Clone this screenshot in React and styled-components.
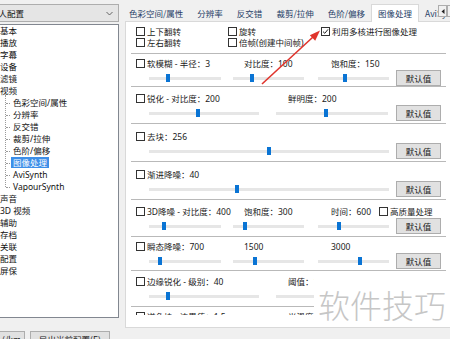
import React from "react"
import styled, { createGlobalStyle } from "styled-components"

const GlobalStyle = createGlobalStyle`
  html, body {
    margin: 0;
    padding: 0;
    background: #f0f0f0;
  }
  body {
    font-family: "Noto Sans", "Noto Sans CJK SC", sans-serif;
    font-size: 8.5px;
    color: #1a1a1a;
  }
`

const topItems = ["基本", "播放", "字幕", "设备", "滤镜", "视频"]
const videoItems = ["色彩空间/属性", "分辨率", "反交错", "裁剪/拉伸", "色阶/偏移", "图像处理", "AviSynth", "VapourSynth"]
const bottomItems = ["声音", "3D 视频", "辅助", "存档", "关联", "配置", "屏保"]
const tabs = ["色彩空间/属性", "分辨率", "反交错", "裁剪/拉伸", "色阶/偏移", "图像处理", "AviSynth"]

const THREE = [
  { w: 93, li: 0, ml: 13, sw: 72 },
  { w: 85, li: 15, ml: 4, sw: 71 },
  { w: 77, li: 17, ml: 4, sw: 71 },
]
const TWO = [
  { w: 137, li: 0, ml: 13, sw: 110 },
  { w: 118, li: 15, ml: 3, sw: 112 },
]
const ONE = [{ w: 255, li: 0, ml: 13, sw: 240 }]

const rows = [
  { h: 33, pt: 3, cols: THREE, labels: ["软模糊 - 半径：3", "对比度：100", "饱和度：150"], thumbs: [19, 19, 27] },
  { h: 37, pt: 5, cols: TWO, labels: ["锐化 - 对比度：200", "鲜明度：200"], thumbs: [49, 50] },
  { h: 38, pt: 6, cols: ONE, labels: ["去块：256"], thumbs: [120] },
  { h: 38, pt: 6, cols: ONE, labels: ["渐进降噪：40"], thumbs: [88] },
  { h: 37, pt: 5, cols: THREE, labels: ["3D降噪 - 对比度：400", "饱和度：300", "时间：600"], thumbs: [15, 12, 21], extra: "高质量处理" },
  { h: 34, pt: 3, cols: THREE, labels: ["瞬态降噪：700", "1500", "3000"], thumbs: [11, 22, 42] },
  { h: 36, pt: 4, cols: TWO, labels: ["边缘锐化 - 级别：40", "阈值：10"], thumbs: [19, 60] },
  { h: 36, pt: 3, cols: TWO, labels: ["逆色块 - 边界值：1.5", "光滑度：4"], thumbs: [30, 40] },
]

const Check = ({ checked }) => (
  <CheckBox>
    {checked && (
      <svg width="7" height="7" viewBox="0 0 7 7">
        <path d="M1 3.6 L2.8 5.3 L6 1.4" fill="none" stroke="#222" strokeWidth="1" />
      </svg>
    )}
  </CheckBox>
)

const App = () => {
  return (
    <Window>
      <GlobalStyle />
      <Main>
        <Side>
          <Combo>
            <span>个人配置</span>
            <svg width="7" height="5" viewBox="0 0 7 5">
              <path d="M0.5 1 L3.5 4 L6.5 1" fill="none" stroke="#555" strokeWidth="0.9" />
            </svg>
          </Combo>
          <Tree>
            {topItems.map(t => (
              <TreeItem key={t}>{t}</TreeItem>
            ))}
            <ChildGroup>
              {videoItems.map(t => (
                <ChildItem key={t}>
                  <ItemText $selected={t === "图像处理"}>{t}</ItemText>
                </ChildItem>
              ))}
            </ChildGroup>
            {bottomItems.map(t => (
              <TreeItem key={t}>{t}</TreeItem>
            ))}
          </Tree>
        </Side>

        <Panel>
          <TabStrip>
            {tabs.map(t => (
              <Tab key={t} $active={t === "图像处理"}>{t}</Tab>
            ))}
            <TabScroll>
              <ScrollBtn>
                <svg width="4" height="5" viewBox="0 0 4 5"><path d="M3.5 0 L0.5 2.5 L3.5 5 Z" fill="#222" /></svg>
              </ScrollBtn>
              <ScrollBtn>
                <svg width="4" height="5" viewBox="0 0 4 5"><path d="M0.5 0 L3.5 2.5 L0.5 5 Z" fill="#222" /></svg>
              </ScrollBtn>
            </TabScroll>
          </TabStrip>
          <Page>
            <Scroll>
              <TopRow>
                <CheckCol $w={92}><Check />上下翻转</CheckCol>
                <CheckCol $w={93}><Check />旋转</CheckCol>
                <CheckCol><Check checked />利用多核进行图像处理</CheckCol>
                <CheckCol $w={92}><Check />左右翻转</CheckCol>
                <CheckCol $w={93}><Check />倍帧(创建中间帧)</CheckCol>
              </TopRow>
              {rows.map((r, i) => (
                <Row key={i} $h={r.h} $pt={r.pt}>
                  <LabelLine>
                    {r.cols.map((c, j) => (
                      <Col key={j} $w={c.w} $li={c.li}>
                        {j === 0 && <Check />}
                        {r.labels[j]}
                        {j === 2 && r.extra && (
                          <Extra><Check />{r.extra}</Extra>
                        )}
                      </Col>
                    ))}
                  </LabelLine>
                  <SliderLine>
                    {r.cols.map((c, j) => (
                      <Col key={j} $w={c.w}>
                        <Track $ml={c.ml} $w={c.sw}>
                          <Thumb $at={r.thumbs[j]} />
                        </Track>
                      </Col>
                    ))}
                    <DefaultButton>默认值</DefaultButton>
                  </SliderLine>
                </Row>
              ))}
            </Scroll>
          </Page>
        </Panel>
      </Main>

      <Footer>
        <FootButton $w={44}>导入(/km</FootButton>
        <FootButton $w={80}>导出当前配置(E)</FootButton>
      </Footer>

      <Arrow viewBox="0 0 450 339" width="450" height="339">
        <line x1="262" y1="84" x2="313" y2="37" stroke="#e0342c" strokeWidth="1.6" />
        <path d="M320 30.5 L315.2 40.8 L309.8 35.2 Z" fill="#e0342c" />
      </Arrow>
      <Watermark>软件技巧</Watermark>
    </Window>
  )
}

export default App

const Window = styled.div`
  position: relative;
  width: 450px;
  height: 339px;
  overflow: hidden;
  display: flex;
  flex-direction: column;
  background: #f0f0f0;
`

const Main = styled.div`
  display: flex;
  height: 328px;
  flex-shrink: 0;
`

const Side = styled.div`
  width: 134px;
  margin-left: -15px;
  flex-shrink: 0;
  display: flex;
  flex-direction: column;
`

const Combo = styled.div`
  margin-top: 4px;
  height: 18px;
  box-sizing: border-box;
  border: 1px solid #adadad;
  background: #e5e5e5;
  display: flex;
  align-items: center;
  justify-content: space-between;
  padding: 0 5px 0 4px;
  font-family: "Noto Sans CJK SC", sans-serif;
  font-size: 8.5px;
  color: #111;
`

const Tree = styled.div`
  margin-top: 2px;
  height: 294px;
  box-sizing: border-box;
  border: 1px solid #828790;
  background: #fff;
  font-family: "Noto Sans", "Noto Sans CJK SC", sans-serif;
  color: #111;
`

const TreeItem = styled.div`
  height: 12px;
  line-height: 12px;
  padding-left: 14px;
  white-space: nowrap;
`

const ChildGroup = styled.div`
  position: relative;

  &::before {
    content: "";
    position: absolute;
    left: 19px;
    top: -2px;
    bottom: 6px;
    border-left: 1px dotted #9a9a9a;
  }
`

const ChildItem = styled.div`
  position: relative;
  height: 12px;
  line-height: 12px;
  padding-left: 25px;
  white-space: nowrap;

  &::before {
    content: "";
    position: absolute;
    left: 20px;
    top: 6px;
    width: 4px;
    border-top: 1px dotted #9a9a9a;
  }
`

const ItemText = styled.span`
  display: inline-block;
  padding: 0 2px;
  height: 11px;
  line-height: 11px;
  background: ${p => (p.$selected ? "#3d8ee8" : "transparent")};
  color: ${p => (p.$selected ? "#fff" : "inherit")};
`

const Panel = styled.div`
  margin-left: 6px;
  width: 327px;
  flex-shrink: 0;
  display: flex;
  flex-direction: column;
`

const TabStrip = styled.div`
  position: relative;
  height: 21px;
  display: flex;
  align-items: flex-end;
  margin-left: -3px;
  font-family: "Noto Sans CJK SC", sans-serif;
  font-size: 8.5px;
  color: #263d66;
  z-index: 1;
`

const Tab = styled.div`
  height: ${p => (p.$active ? "18px" : "17px")};
  line-height: 16px;
  padding: 0 ${p => (p.$active ? "6px" : "6px")};
  margin: ${p => (p.$active ? "0 -1px -1px" : "0")};
  box-sizing: border-box;
  white-space: nowrap;
  background: ${p => (p.$active ? "#fff" : "transparent")};
  border: 1px solid ${p => (p.$active ? "#d9d9d9" : "transparent")};
  border-bottom: none;
  flex-shrink: 0;
`

const TabScroll = styled.div`
  position: absolute;
  left: 316px;
  top: 5px;
  display: flex;
`

const ScrollBtn = styled.div`
  width: 9px;
  height: 12px;
  box-sizing: border-box;
  border: 1px solid #adadad;
  background: #f0f0f0;
  display: flex;
  align-items: center;
  justify-content: center;
`

const Page = styled.div`
  height: 307px;
  box-sizing: border-box;
  border: 1px solid #d9d9d9;
  background: #fff;
  font-family: "Noto Sans", "Noto Sans CJK SC", sans-serif;
  font-size: 8.5px;
  color: #1a1a1a;
`

const Scroll = styled.div`
  height: 293px;
  overflow: hidden;
`

const TopRow = styled.div`
  margin: 0 5px;
  padding: 4px 5px 0;
  height: 32px;
  box-sizing: border-box;
  border-bottom: 1px solid #b9b9b9;
  display: flex;
  flex-wrap: wrap;
  align-content: flex-start;
`

const CheckCol = styled.div`
  width: ${p => (p.$w ? `${p.$w}px` : "auto")};
  flex: ${p => (p.$w ? "none" : "1")};
  height: 11px;
  line-height: 11px;
  display: flex;
  align-items: center;
  white-space: nowrap;
`

const CheckBox = styled.span`
  width: 9px;
  height: 9px;
  box-sizing: border-box;
  border: 1px solid #333;
  background: #fff;
  margin-right: 2px;
  flex-shrink: 0;
  display: inline-flex;
  align-items: center;
  justify-content: center;
`

const Row = styled.div`
  margin: 0 5px;
  padding: ${p => p.$pt}px 5px 0;
  height: ${p => p.$h}px;
  box-sizing: border-box;
  border-bottom: 1px solid #b9b9b9;
`

const LabelLine = styled.div`
  display: flex;
  height: 12px;
  align-items: center;
`

const Col = styled.div`
  width: ${p => p.$w}px;
  padding-left: ${p => p.$li || 0}px;
  box-sizing: border-box;
  flex-shrink: 0;
  display: flex;
  align-items: center;
  white-space: nowrap;
`

const Extra = styled.span`
  display: inline-flex;
  align-items: center;
  margin-left: 8px;
`

const SliderLine = styled.div`
  display: flex;
  height: 18px;
  align-items: center;
`

const Track = styled.div`
  position: relative;
  margin-left: ${p => p.$ml}px;
  width: ${p => p.$w}px;
  height: 3px;
  background: #e6e6e6;
`

const Thumb = styled.div`
  position: absolute;
  left: ${p => p.$at}px;
  top: 50%;
  width: 4px;
  height: 8px;
  margin: -4px 0 0 -2px;
  background: #0a74d4;
`

const DefaultButton = styled.button`
  margin-left: auto;
  width: 45px;
  height: 16px;
  padding: 0;
  box-sizing: border-box;
  border: 1px solid #adadad;
  background: #e1e1e1;
  font-family: "Noto Sans CJK SC", sans-serif;
  font-size: 8.5px;
  line-height: 14px;
  color: #1a1a1a;
`

const Footer = styled.div`
  display: flex;
  gap: 5px;
  padding-top: 3px;
  margin-left: -19px;
`

const FootButton = styled.div`
  width: ${p => p.$w}px;
  height: 18px;
  box-sizing: border-box;
  border: 1px solid #adadad;
  background: #e1e1e1;
  text-align: center;
  line-height: 15px;
  font-family: "Noto Sans CJK SC", sans-serif;
  font-size: 8.5px;
  color: #1a1a1a;
`

const Arrow = styled.svg`
  position: absolute;
  left: 0;
  top: 0;
  pointer-events: none;
  z-index: 3;
`

const Watermark = styled.div`
  position: absolute;
  left: 314px;
  top: 272px;
  width: 136px;
  height: 46px;
  box-sizing: border-box;
  padding: 16px 0 0 4px;
  background: #fff;
  color: #c6c6c6;
  font-family: "Noto Sans CJK SC", sans-serif;
  font-weight: 300;
  font-size: 32px;
  line-height: 32px;
  white-space: nowrap;
  z-index: 2;
`
